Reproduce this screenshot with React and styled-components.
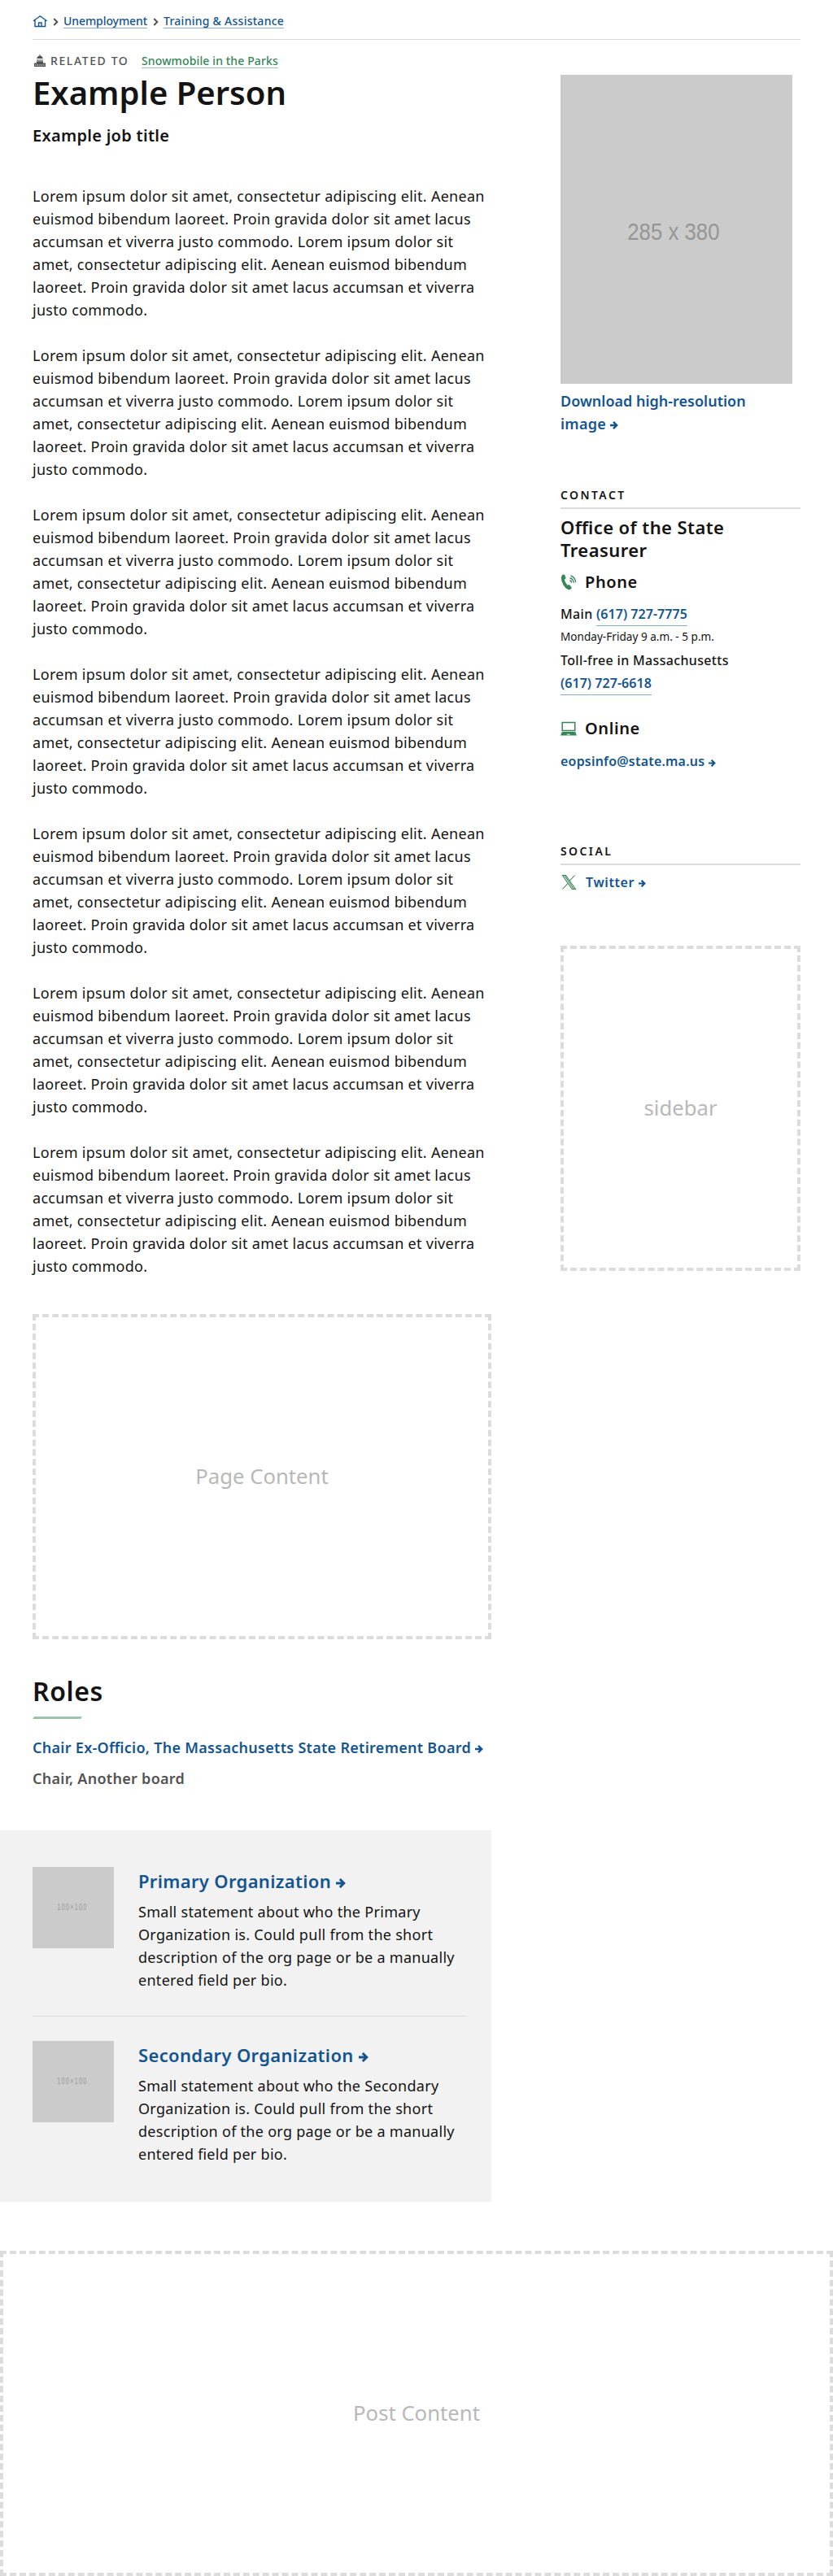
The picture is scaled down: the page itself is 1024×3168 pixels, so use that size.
import React from 'react';
import styled, { createGlobalStyle } from 'styled-components';

const Global = createGlobalStyle`
  *, *::before, *::after { box-sizing: border-box; }
  body {
    margin: 0;
    background: #fff;
    color: #141414;
    font-family: "Noto Sans", sans-serif;
    font-size: 18px;
    line-height: 28px;
    letter-spacing: .29px;
    font-feature-settings: "liga" 1;
  }
  h1, h2, h3, p { margin: 0; padding: 0; }
  a { color: #14558f; text-decoration: none; }
`;

const Page = styled.div`
  width: 1024px;
  height: 3168px;
  overflow: hidden;
`;

const Breadcrumbs = styled.nav`
  display: flex;
  align-items: center;
  gap: 6.5px;
  height: 49px;
  margin: 0 40px;
  padding-top: 5px;
  border-bottom: 1px solid #dcdcdc;
  color: #535353;
`;

const TextLink = styled.a`
  font-size: 14px;
  font-weight: 500;
  letter-spacing: ${p => p.$spacing || 0}px;
  line-height: 16px;
  color: ${p => (p.$green ? '#388557' : '#14558f')};
  border-bottom: 1px solid ${p => (p.$green ? '#9bc2ab' : '#89aac7')};
`;

const Related = styled.div`
  display: flex;
  align-items: center;
  height: 26px;
  margin: 12px 40px 0 42px;
  padding-top: 3px;
  color: #535353;
`;

const RelatedLabel = styled.span`
  margin: 0 15.6px 0 6px;
  padding-bottom: 1px;
  font-size: 14px;
  font-weight: 500;
  letter-spacing: 1.6px;
  line-height: 18px;
`;

const Columns = styled.div`
  display: flex;
  justify-content: space-between;
  padding: 0 40px;
`;

const Main = styled.main`
  width: 564px;
`;

const PersonName = styled.h1`
  margin-top: 2px;
  font-size: 40px;
  font-weight: 600;
  letter-spacing: 0;
  line-height: 50px;
`;

const JobTitle = styled.h2`
  margin: 14px 0 46px;
  font-size: 20px;
  font-weight: 600;
  line-height: 28px;
`;

const Paragraph = styled.p`
  margin-bottom: 28px;
`;

const Slot = styled.div`
  display: flex;
  align-items: center;
  justify-content: center;
  height: 400px;
  margin-top: ${p => p.$top}px;
  border: 4px dashed #dcdcdc;
  color: #b8b8b8;
  font-size: 25.7px;
  letter-spacing: 0;
`;

const RolesTitle = styled.h2`
  margin-top: 41px;
  font-size: 32px;
  font-weight: 600;
  letter-spacing: .6px;
  line-height: 46px;
`;

const Accent = styled.div`
  width: 59px;
  height: 3px;
  margin: 8px 0 21px 1px;
  background: #9bc2ab;
  transform: skewX(-30deg);
`;

const Role = styled.p`
  margin-bottom: 10px;
  color: #535353;
  font-weight: 600;
  white-space: nowrap;
`;

const Organizations = styled.section`
  width: 604px;
  height: 457px;
  margin: 50px 0 0 -40px;
  padding: 45px 30px 0 40px;
  background: #f2f2f2;
`;

const Organization = styled.article`
  display: flex;
  gap: 30px;
  height: ${p => (p.$last ? 170 : 184)}px;
  margin-bottom: 30px;
  border-bottom: ${p => (p.$last ? 0 : 1)}px solid #dcdcdc;
`;

const Thumb = styled.div`
  flex: none;
  display: flex;
  align-items: center;
  justify-content: center;
  width: 100px;
  height: 100px;
  padding-right: 3px;
  background: #cbcbcb;
  color: #989898;
  font: 10px/10px "Liberation Sans", sans-serif;
  letter-spacing: 1.8px;
`;

const ThumbSize = styled.span`
  transform: scaleX(.72);
`;

const OrgName = styled.h3`
  margin-top: 4px;
  font-size: 22px;
  font-weight: 600;
  letter-spacing: .33px;
  line-height: 26px;
`;

const OrgText = styled.p`
  margin-top: 11px;
`;

const Side = styled.aside`
  width: 295px;
  padding-top: 5px;
`;

const Portrait = styled.div`
  display: flex;
  align-items: center;
  justify-content: center;
  width: 285px;
  height: 380px;
  padding: 5px 8px 0 0;
  background: #cbcbcb;
  color: #969696;
  font: 30px "Liberation Sans", sans-serif;
  letter-spacing: 0;
`;

const PortraitSize = styled.span`
  transform: scaleX(.86);
`;

const Download = styled.a`
  display: block;
  width: 285px;
  margin-top: 7px;
  font-weight: 600;
  letter-spacing: 0;
`;

const NoWrap = styled.span`
  white-space: nowrap;
  letter-spacing: .28px;
`;

const SideHeading = styled.h2`
  margin-top: ${p => p.$top}px;
  padding-bottom: 5px;
  border-bottom: 2px solid #dcdcdc;
  font-size: 14px;
  font-weight: 600;
  letter-spacing: 2.4px;
  line-height: 20px;
`;

const Office = styled.h3`
  width: 260px;
  margin-top: 8px;
  font-size: 22px;
  font-weight: 600;
  letter-spacing: .42px;
  line-height: 28px;
`;

const Method = styled.h3`
  display: flex;
  align-items: center;
  gap: 10px;
  height: 28px;
  margin: ${p => p.$top}px 0 11px;
  font-size: 20px;
  font-weight: 600;
  letter-spacing: .6px;
`;

const Detail = styled.p`
  font-size: 16px;
  font-weight: 500;
  letter-spacing: .34px;
  line-height: 28px;
`;

const Hours = styled.p`
  margin-bottom: 1px;
  font-size: 13.6px;
  letter-spacing: 0;
  line-height: 28px;
`;

const PhoneLink = styled.a`
  padding-bottom: 3px;
  border-bottom: 1px solid #89aac7;
  font-weight: 600;
  letter-spacing: .05px;
`;

const StrongLink = styled.a`
  font-size: 16px;
  font-weight: 600;
  letter-spacing: ${p => p.$spacing}px;
`;

const Email = styled.div`
  height: 28px;
`;

const Social = styled.div`
  display: flex;
  align-items: center;
  gap: 11px;
  height: 28px;
  margin-top: 7px;
`;

const ArrowSvg = styled.svg`
  vertical-align: ${p => p.$lift}px;
`;

const Arrow = ({ size = 9, lift = 0 }) => (
  <ArrowSvg $lift={lift} width={size} height={size} viewBox="0 0 10 10" fill="none" stroke="currentColor" strokeWidth="2.4">
    <path d="M0 5h8.300M4 .8l4.200 4.200-4.200 4.200" />
  </ArrowSvg>
);

const Chevron = () => (
  <svg width="7" height="10" viewBox="0 0 7 10" fill="none" stroke="currentColor" strokeWidth="2">
    <path d="M1.300 1l4 4-4 4" />
  </svg>
);

const Home = () => (
  <svg width="18" height="17" viewBox="0 0 18 17" fill="none" stroke="#14558f" strokeWidth="1.4">
    <path d="M.9 7.800L9.300 1.800l8.300 6M3 6.800v7.700h12.600V6.800M7.600 14.500v-4.500h3.400v4.500" />
  </svg>
);

const HouseSvg = styled.svg`
  margin-bottom: 3px;
`;

const StateHouse = () => (
  <HouseSvg width="14" height="15" viewBox="0 0 14 15" fill="currentColor">
    <path d="M6.500 0h1v2h-1zM3.200 5Q4 1.500 7 1.500T10.800 5zM3.500 6h1v3h-1zM5.500 6h1v3h-1zM7.500 6h1v3h-1zM9.500 6h1v3h-1zM3 8.500h8V11H3zM0 10.500h14V15H0z" />
    <path d="M1.500 12h1v2h-1zM4 12h1v2H4zM6.500 12h1v2h-1zM9 12h1v2H9zM11.500 12h1v2h-1z" fill="#ccc" />
  </HouseSvg>
);

const Phone = () => (
  <svg width="20" height="20" viewBox="0 0 20 20" fill="none" stroke="#388557">
    <path d="M1.800 1.500Q3.500.2 5 .8L6.600 4.500Q6.500 6 4.800 6.800Q5.500 10.800 8.600 13.700Q10.200 12.600 11.200 13.400L13.800 16.500Q13.500 18.800 11 19.400Q7 19 3.600 13.600Q-.5 6 1.800 1.500z" fill="#388557" stroke="none" />
    <path d="M11.300 7.600q2.200.4 2.300 3M11.500 4.700q4.200 1 4.800 6M12.500 1.800q5.500 2 6.200 8.500" strokeWidth="1.400" />
  </svg>
);

const Laptop = () => (
  <svg width="20" height="18" viewBox="0 0 20 18">
    <path d="M2.200 1.500h15.600v10H2.200z" fill="none" stroke="#388557" strokeWidth="1.500" />
    <path d="M1.800 13h16.400L20 17.500H0z" fill="#388557" />
    <path d="M7.500 17h4.500l-.8-1.500H8.300z" fill="#b9d6c5" />
  </svg>
);

const XLogo = () => (
  <svg width="20" height="20" viewBox="0 0 20 20" fill="none" stroke="#388557" strokeWidth="1.1">
    <path d="M2.500 1.500h4l12 17h-4.300zM17.500 1.500l-6.500 7M9 11.500l-6.500 7M4.800 1.500l11.500 17" />
  </svg>
);

const BIO = 'Lorem ipsum dolor sit amet, consectetur adipiscing elit. Aenean euismod bibendum laoreet. Proin gravida dolor sit amet lacus accumsan et viverra justo commodo. Lorem ipsum dolor sit amet, consectetur adipiscing elit. Aenean euismod bibendum laoreet. Proin gravida dolor sit amet lacus accumsan et viverra justo commodo.';

export default function App() {
  return (
    <Page>
      <Global />
      <Breadcrumbs>
        <Home /><Chevron />
        <TextLink href="#" $spacing={-0.08}>Unemployment</TextLink><Chevron />
        <TextLink href="#" $spacing={0.26}>Training &amp; Assistance</TextLink>
      </Breadcrumbs>
      <Related>
        <StateHouse />
        <RelatedLabel>RELATED TO</RelatedLabel>
        <TextLink href="#" $spacing={0.13} $green>Snowmobile in the Parks</TextLink>
      </Related>
      <Columns>
        <Main>
          <PersonName>Example Person</PersonName>
          <JobTitle>Example job title</JobTitle>
          {Array.from({ length: 7 }, (_, i) => <Paragraph key={i}>{BIO}</Paragraph>)}
          <Slot $top={45}>Page Content</Slot>
          <RolesTitle>Roles</RolesTitle>
          <Accent />
          <Role><a href="#">Chair Ex-Officio, The Massachusetts State Retirement Board <Arrow size={10} /></a></Role>
          <Role>Chair, Another board</Role>
          <Organizations>
            {['Primary', 'Secondary'].map((name, i) => (
              <Organization key={name} $last={i === 1}>
                <Thumb><ThumbSize>100×100</ThumbSize></Thumb>
                <div>
                  <OrgName><a href="#">{name} Organization <Arrow size={12} /></a></OrgName>
                  <OrgText>Small statement about who the {name} Organization is. Could pull from the short description of the org page or be a manually entered field per bio.</OrgText>
                </div>
              </Organization>
            ))}
          </Organizations>
        </Main>
        <Side>
          <Portrait><PortraitSize>285 x 380</PortraitSize></Portrait>
          <Download href="#">Download high-resolution <NoWrap>image <Arrow size={10} /></NoWrap></Download>
          <SideHeading $top={64}>CONTACT</SideHeading>
          <Office>Office of the State Treasurer</Office>
          <Method $top={12}><Phone />Phone</Method>
          <Detail>Main <PhoneLink href="#">(617) 727-7775</PhoneLink></Detail>
          <Hours>Monday-Friday 9 a.m. - 5 p.m.</Hours>
          <Detail>Toll-free in Massachusetts</Detail>
          <Detail><PhoneLink href="#">(617) 727-6618</PhoneLink></Detail>
          <Method $top={28}><Laptop />Online</Method>
          <Email><StrongLink href="#" $spacing={0.2}>eopsinfo@state.ma.us <Arrow lift={-0.5} /></StrongLink></Email>
          <SideHeading $top={88}>SOCIAL</SideHeading>
          <Social><XLogo /><StrongLink href="#" $spacing={0.6}>Twitter <Arrow /></StrongLink></Social>
          <Slot $top={64}>sidebar</Slot>
        </Side>
      </Columns>
      <Slot $top={60}>Post Content</Slot>
    </Page>
  );
}
